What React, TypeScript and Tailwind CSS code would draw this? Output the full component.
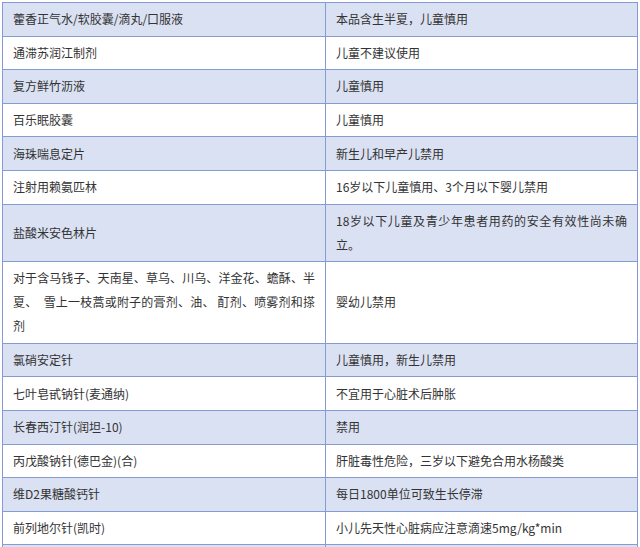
const rows: [string, string][] = [
  ['藿香正气水/软胶囊/滴丸/口服液', '本品含生半夏，儿童慎用'],
  ['通滞苏润江制剂', '儿童不建议使用'],
  ['复方鲜竹沥液', '儿童慎用'],
  ['百乐眠胶囊', '儿童慎用'],
  ['海珠喘息定片', '新生儿和早产儿禁用'],
  ['注射用赖氨匹林', '16岁以下儿童慎用、3个月以下婴儿禁用'],
  ['盐酸米安色林片', '18岁以下儿童及青少年患者用药的安全有效性尚未确立。'],
  [
    '对于含马钱子、天南星、草乌、川乌、洋金花、蟾酥、半夏、　雪上一枝蒿或附子的膏剂、油、 酊剂、喷雾剂和搽剂',
    '婴幼儿禁用',
  ],
  ['氯硝安定针', '儿童慎用，新生儿禁用'],
  ['七叶皂甙钠针(麦通纳)', '不宜用于心脏术后肿胀'],
  ['长春西汀针(润坦-10)', '禁用'],
  ['丙戊酸钠针(德巴金)(合)', '肝脏毒性危险，三岁以下避免合用水杨酸类'],
  ['维D2果糖酸钙针', '每日1800单位可致生长停滞'],
  ['前列地尔针(凯时)', '小儿先天性心脏病应注意滴速5mg/kg*min'],
  ['', ''],
];

export default function App() {
  return (
    <div className="w-[640px] h-[547px] overflow-hidden bg-white pl-[2px] pt-[2px]">
      <table
        className="w-[635px] table-fixed border-collapse text-[12px] leading-[24px] text-[#333]"
        style={{ fontFamily: '"Microsoft YaHei", "Noto Sans CJK SC", sans-serif' }}
      >
        <colgroup>
          <col className="w-[323px]" />
          <col className="w-[312px]" />
        </colgroup>
        <tbody>
          {rows.map(([name, note], i) => (
            <tr key={i} className={i % 2 === 0 ? 'bg-[#dae1f2]' : 'bg-white'}>
              <td className="border border-[#849cd1] px-[10px] py-[4.3px] text-justify align-middle">
                {name}
              </td>
              <td className="border border-[#849cd1] px-[10px] py-[4.3px] text-justify align-middle">
                {note}
              </td>
            </tr>
          ))}
        </tbody>
      </table>
    </div>
  );
}
